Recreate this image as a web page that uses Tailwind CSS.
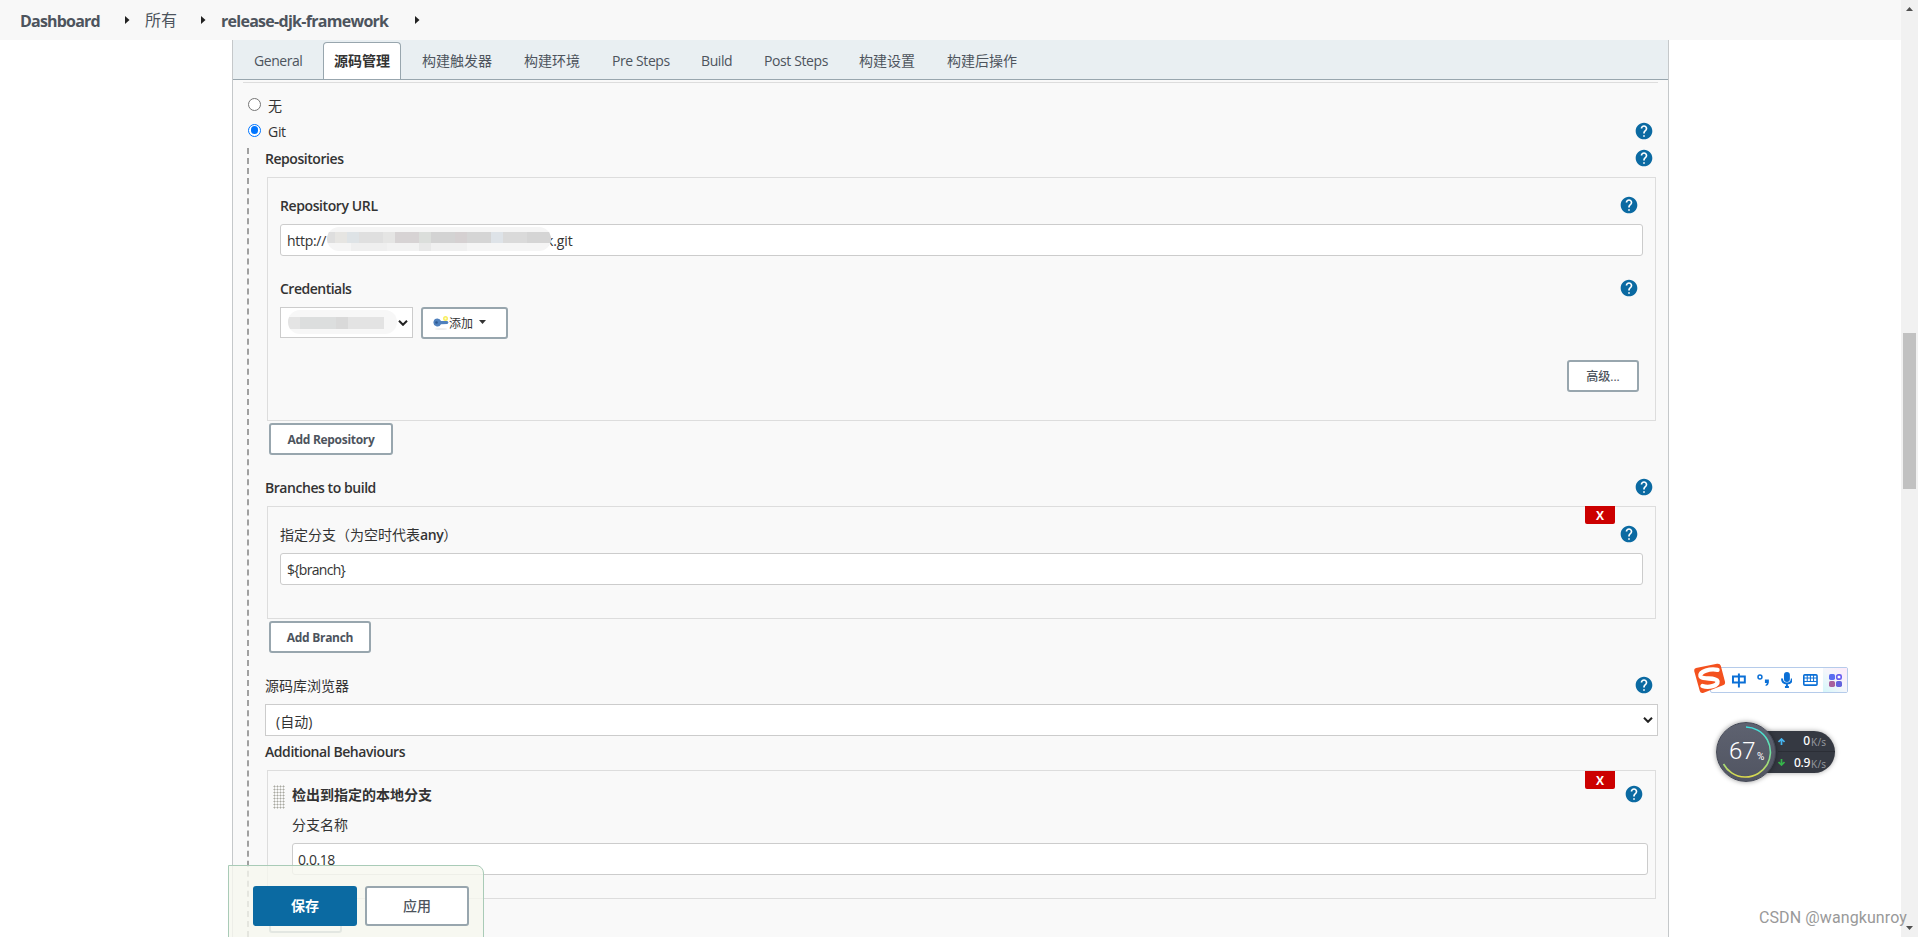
<!DOCTYPE html>
<html lang="zh">

<head>
    <meta charset="UTF-8">
    <title>release-djk-framework Config</title>
    <script src="https://cdn.jsdelivr.net/npm/@tailwindcss/browser@4"></script>
</head>

<body class="relative h-[937px] overflow-hidden bg-white font-['Open_Sans','Noto_Sans_CJK_SC',sans-serif] text-[14px] leading-5 text-[#333]">
    <!-- 图标 -->
    <svg class="hidden">
        <symbol id="help" viewBox="0 0 24 24">
            <circle cx="12" cy="12" r="8" fill="#fff" />
            <path fill="#0b6aa2" d="M12 2C6.480 2 2 6.480 2 12s4.480 10 10 10 10-4.480 10-10S17.520 2 12 2zm1 17h-2v-2h2v2zm2.070-7.750l-.9.920C13.450 12.900 13 13.500 13 15h-2v-.5c0-1.100.45-2.100 1.170-2.830l1.240-1.260c.37-.36.59-.86.59-1.410 0-1.100-.9-2-2-2s-2 .9-2 2H8c0-2.210 1.790-4 4-4s4 1.790 4 4c0 .88-.36 1.680-.93 2.250z" />
        </symbol>
        <symbol id="crumb" viewBox="0 0 5 8">
            <path fill="#222" d="M0 0l4.500 4L0 8z" />
        </symbol>
        <symbol id="chevron" viewBox="0 0 10 6">
            <path fill="none" stroke="#222" stroke-width="2" d="M1 .8l4 4 4-4" />
        </symbol>
    </svg>

    <!-- 面包屑 -->
    <header class="flex h-10 w-[1901px] items-center bg-[#f8f8f8] pl-5 text-[16px] font-bold text-[#4d545d]">
        <span class="mt-px w-[105px] tracking-[-0.8px]">Dashboard</span>
        <svg class="h-2 w-[5px]"><use href="#crumb" /></svg>
        <span class="ml-[15px] w-[56px] font-normal">所有</span>
        <svg class="h-2 w-[5px]"><use href="#crumb" /></svg>
        <span class="mt-px ml-[15px] w-[194px] tracking-[-0.72px]">release-djk-framework</span>
        <svg class="h-2 w-[5px]"><use href="#crumb" /></svg>
    </header>

    <main class="ml-[232px] h-[897px] w-[1437px] border-x border-[#c5c8ca] bg-[#f9f9f9]">
        <!-- 标签栏 -->
        <nav class="flex h-10 items-end border-b border-[#98a6ae] bg-[#e9eff2] pl-[21px] leading-[37px] text-[#4d545d]">
            <a class="w-[69px] tracking-[-0.45px]">General</a>
            <a class="mr-[21px] h-[37px] w-[78px] rounded-t-[4px] border border-b-0 border-[#98a6ae] bg-white text-center leading-[35px] font-bold text-[#333]">源码管理</a>
            <a class="w-[102px]">构建触发器</a>
            <a class="w-[88px]">构建环境</a>
            <a class="w-[89px] tracking-[-0.4px]">Pre Steps</a>
            <a class="w-[63px] tracking-[-0.4px]">Build</a>
            <a class="w-[95px] tracking-[-0.4px]">Post Steps</a>
            <a class="w-[88px]">构建设置</a>
            <a>构建后操作</a>
        </nav>

        <div class="ml-[10px] mr-[10px] mt-[2px] border-t border-[#ddd]"></div>

        <div class="flex h-[26px] items-center pl-[15px] mt-[10px]">
            <span class="mb-1 size-[13px] rounded-full border border-[#767676] bg-white"></span>
            <label class="mb-px ml-[7px]">无</label>
        </div>
        <div class="flex h-[26px] items-center pl-[15px]">
            <span class="mb-1 flex size-[13px] items-center justify-center rounded-full border border-[#0075ff] bg-white"><i class="size-[7.500px] rounded-full bg-[#0075ff]"></i></span>
            <label class="ml-[7px] tracking-[-0.3px]">Git</label>
            <svg class="mb-[2px] ml-auto mr-[14px] size-5"><use href="#help" /></svg>
        </div>

        <div class="ml-[14px] mt-[3px] h-[789px] border-l-2 border-dashed border-[#a0a0a0] pl-4 pr-[10px]">
            <div class="flex h-[29px] items-center justify-between pr-1 pb-[7px]">
                <span class="font-semibold tracking-[-0.45px]">Repositories</span>
                <svg class="mb-[2px] size-5"><use href="#help" /></svg>
            </div>
            <div class="ml-[2px] mr-[2px] h-[244px] border border-[#ddd] px-3 pt-[18px]">
                <div class="flex h-[20px] items-center justify-between pr-1">
                    <span class="font-semibold tracking-[-0.4px]">Repository URL</span>
                    <svg class="mb-[2px] size-5"><use href="#help" /></svg>
                </div>
                <div class="mt-2 flex h-8 items-center rounded-[3px] border border-[#ccc] bg-white pl-[6px] pt-[2px]">
                    <span class="w-10 tracking-[-0.3px]">http://</span>
                    <!-- 打码的仓库地址 -->
                    <span class="relative z-10 mb-[5px] flex h-6 w-[224px] flex-col overflow-hidden rounded-full bg-[#f5f5f5] pt-[5px]">
                        <span class="flex h-3">
                            <i class="w-2 bg-[#dedede]"></i><i class="w-3 bg-[#e6e5e2]"></i><i class="w-3 bg-[#dee3e6]"></i><i class="w-6 bg-[#dfdfdf]"></i><i class="w-3 bg-[#e5e5e4]"></i><i class="w-6 bg-[#d7d3d4]"></i><i class="w-3 bg-[#dbdedb]"></i><i class="w-6 bg-[#d3d3d3]"></i><i class="w-3 bg-[#d5d0d1]"></i><i class="w-6 bg-[#d5d5d5]"></i><i class="w-3 bg-[#dee3e8]"></i><i class="w-6 bg-[#dadada]"></i><i class="flex-1 bg-[#d5d5d5]"></i>
                        </span>
                        <span class="ml-6 flex h-2"><i class="w-9 bg-[#efefef]"></i><i class="w-8 bg-[#f2f2f2]"></i><i class="w-3 bg-[#e8e8e8]"></i><i class="w-9 bg-[#f0f0f0]"></i></span>
                    </span>
                    <span class="-ml-[5px] tracking-[-0.1px]">k.git</span>
                </div>
                <div class="mt-[23px] flex h-[20px] items-center justify-between pr-1">
                    <span class="font-semibold tracking-[-0.5px]">Credentials</span>
                    <svg class="mb-[2px] size-5"><use href="#help" /></svg>
                </div>
                <div class="mt-2 flex gap-2">
                    <div class="flex h-[31px] w-[133px] items-center border border-[#ccc] bg-white pl-[7px]">
                        <span class="mb-[2px] flex h-6 w-[109px] items-center overflow-hidden rounded-full bg-[#f7f7f7]"><i class="mt-[2px] h-3 w-3 bg-[#e4e4e4]"></i><i class="mt-[2px] h-3 w-9 bg-[#dcdede]"></i><i class="mt-[2px] h-3 w-3 bg-[#d9d9d9]"></i><i class="mt-[2px] h-3 w-9 bg-[#e3e3e3]"></i></span>
                        <svg class="ml-px h-[6px] w-[10px]"><use href="#chevron" /></svg>
                    </div>
                    <button class="flex h-8 w-[87px] items-center rounded-[3px] border-2 border-[#98a6ae] bg-white pl-[10px] text-[12px] text-[#333]">
                        <svg class="h-4 w-4" viewBox="0 0 16 16">
                            <ellipse cx="8" cy="14" rx="6" ry="1" fill="#eee" />
                            <circle cx="12.500" cy="3.500" r="2.500" fill="#f8ee60" />
                            <circle cx="12.500" cy="3.500" r="1" fill="#fffbd0" />
                            <path fill="#4f80bd" d="M4.500 3.500a4 4 0 1 0 3.500 5.800l6.500-.3 1-1.700-1.200-1.300H8a4 4 0 0 0-3.500-2.500z" />
                            <circle cx="3.500" cy="7.500" r="1.300" fill="#2c5890" />
                        </svg>
                        <span class="mt-[2px]">添加</span>
                        <svg class="mb-[2px] ml-[6px] h-1 w-[7px]" viewBox="0 0 7 4"><path fill="#333" d="M0 0h7L3.500 4z" /></svg>
                    </button>
                </div>
                <button class="mt-[21px] ml-auto mr-1 block h-8 w-[72px] rounded-[3px] border-2 border-[#98a6ae] bg-white pt-[2px] text-[12px] leading-[26px] font-medium text-[#4d545d]">高级...</button>
            </div>
            <button class="ml-1 mt-[2px] block h-8 w-[124px] rounded-[3px] border-2 border-[#98a6ae] bg-white pt-[2px] text-[12px] leading-[26px] font-bold tracking-[-0.3px] text-[#4d545d]">Add Repository</button>

            <div class="mt-[22px] flex h-[29px] items-center justify-between pr-1 pb-[7px]">
                <span class="font-semibold tracking-[-0.45px]">Branches to build</span>
                <svg class="mb-[2px] size-5"><use href="#help" /></svg>
            </div>
            <div class="relative ml-[2px] mr-[2px] h-[113px] border border-[#ddd] px-3 pt-[18px]">
                <button class="absolute -top-px right-[40px] h-[18px] w-[30px] rounded-b-[2px] bg-[#c00] pt-px text-[12px] leading-[18px] font-bold text-white">X</button>
                <div class="flex h-[20px] items-center justify-between pr-1">
                    <span>指定分支（为空时代表<b class="font-semibold tracking-[-0.4px]">any</b>）</span>
                    <svg class="mb-[2px] size-5"><use href="#help" /></svg>
                </div>
                <div class="mt-2 h-8 rounded-[3px] border border-[#ccc] bg-white pl-[6px] leading-8 tracking-[-0.7px]">${branch}</div>
            </div>
            <button class="ml-1 mt-[2px] block h-8 w-[102px] rounded-[3px] border-2 border-[#98a6ae] bg-white pt-[2px] text-[12px] leading-[26px] font-bold tracking-[-0.3px] text-[#4d545d]">Add Branch</button>

            <div class="mt-[22px] flex h-[29px] items-center justify-between pr-1 pb-[7px]">
                <span>源码库浏览器</span>
                <svg class="mb-[2px] size-5"><use href="#help" /></svg>
            </div>
            <div class="flex h-8 items-center justify-between border border-[#ccc] bg-white pl-[10px] pr-1">
                <span class="mt-1">(自动)</span>
                <svg class="h-[6px] w-[10px]"><use href="#chevron" /></svg>
            </div>
            <div class="mt-[6px] h-7 font-semibold tracking-[-0.43px]">Additional Behaviours</div>
            <div class="relative ml-[2px] mr-[2px] flex h-[129px] border border-[#ddd] pl-[5px] pt-[14px]">
                <button class="absolute top-0 right-[40px] h-[18px] w-[30px] rounded-b-[2px] bg-[#c00] pt-px text-[12px] leading-[18px] font-bold text-white">X</button>
                <!-- 拖动手柄 -->
                <span class="h-6 w-3 bg-[radial-gradient(circle,#a8a8a0_0.8px,transparent_1.200px)] bg-[size:3px_3px]"></span>
                <div class="ml-[7px] flex-1 pr-[7px]">
                    <div class="flex h-5 items-center justify-between pr-1">
                        <b>检出到指定的本地分支</b>
                        <svg class="mb-[2px] size-5"><use href="#help" /></svg>
                    </div>
                    <div class="mt-[10px]">分支名称</div>
                    <div class="mt-2 h-8 rounded-[3px] border border-[#ccc] bg-white pl-[5px] leading-8 tracking-[-0.4px]">0.0.18</div>
                </div>
            </div>
            <button class="ml-1 mt-[2px] block h-8 w-[73px] rounded-[3px] border-2 border-[#98a6ae] bg-white"></button>
        </div>
    </main>

    <!-- 底部保存栏 -->
    <footer class="absolute top-[865px] left-[228px] flex h-[73px] w-[256px] gap-2 rounded-tr-[8px] border border-[#a9cbb7] bg-[#f6f8ef]/80 pt-5 pl-6">
        <button class="h-10 w-[104px] rounded-[3px] bg-[#0b6aa2] font-bold text-white">保存</button>
        <button class="h-10 w-[104px] rounded-[3px] border-2 border-[#98a6ae] bg-white font-medium text-[#4d545d]">应用</button>
    </footer>

    <!-- 输入法悬浮条 -->
    <div class="absolute top-[667px] left-[1710px] flex h-[26px] w-[138px] items-center rounded-[2px] border border-[#b5cbea] bg-white text-[#0a6fd6]">
        <svg class="absolute -top-[5px] -left-[18px] h-[31px] w-[33px]" viewBox="0 0 33 31">
            <path fill="#f4511e" d="M3 5L24 .8q3-.5 3.800 2l4.200 16q.5 2.500-2 3.500L10 30q-2.500.5-3.200-2L1.200 8Q.8 5.500 3 5z" />
            <path fill="none" stroke="#fff" stroke-width="4.400" stroke-linecap="round" d="M24.500 6.800C17 5.500 6.500 8 7.500 13c1 4 16.500 1 17 5.500.4 4.500-9 6.500-15 4.500" />
        </svg>
        <svg class="ml-[20px] h-[15px] w-[16px]" viewBox="0 0 16 15" fill="none" stroke="currentColor" stroke-width="2"><path d="M2 3.500h12v6H2zM8 .5v14" /></svg>
        <svg class="ml-[10px] h-3 w-[13px]" viewBox="0 0 13 12"><circle cx="3" cy="3" r="2" fill="none" stroke="currentColor" stroke-width="1.500" /><path fill="currentColor" d="M8 5.500h4v3q0 2.500-3 3.500l-.5-1q1.500-.8 1.500-2H8z" /></svg>
        <svg class="ml-[11px] h-4 w-3" viewBox="0 0 12 16"><rect x="3" width="6" height="10" rx="3" fill="currentColor" /><path fill="none" stroke="currentColor" stroke-width="2" d="M1 6.500q0 5 5 5t5-5M6 11.500V14M4 15h4" /></svg>
        <svg class="ml-[11px] h-3 w-[15px]" viewBox="0 0 15 12"><rect x=".8" y=".8" width="13.400" height="10.400" rx="1" fill="none" stroke="currentColor" stroke-width="1.600" /><path stroke="currentColor" stroke-width="1" d="M1 4h13M1 7.500h13M4.300 1v7M7.500 1v7M10.700 1v7" /></svg>
        <span class="ml-[5px] flex h-6 w-[24px] items-center justify-center bg-linear-to-tr from-[#d4f6fa] via-[#f4f6fb] to-[#fdeafa]">
            <svg class="size-[13px]" viewBox="0 0 14 14"><rect width="6.500" height="6.500" rx="1.800" fill="#5b6cf0" /><rect x="8.400" y=".9" width="4.700" height="4.700" rx="1.500" fill="#fff" stroke="#6a5cf0" stroke-width="1.800" /><rect y="7.500" width="6.500" height="6.500" rx="1.800" fill="#a8609c" /><rect x="7.500" y="7.500" width="6.500" height="6.500" rx="1.800" fill="#6463dd" /></svg>
        </span>
    </div>

    <!-- 网速悬浮球 -->
    <div class="absolute top-[731px] left-[1746px] h-[42px] w-[89px] rounded-r-full bg-[#353942] shadow-[0_0_5px_rgba(0,0,0,0.35)]">
        <div class="ml-[32px] flex h-[21px] items-center border-b border-[#2b2e36] pr-[8px] font-['Noto_Sans']">
            <svg class="h-[7px] w-[7px]" viewBox="0 0 7 7" fill="none" stroke="#45b5f0" stroke-width="1.700"><path d="M.5 4l3-3 3 3M3.500 1v6" /></svg>
            <span class="ml-auto text-[12px] font-medium text-white">0</span><span class="ml-px mt-[2px] w-4 text-[10px] tracking-[0.2px] text-[#92959c]">K/s</span>
        </div>
        <div class="ml-[32px] flex h-[21px] items-center pr-[8px] font-['Noto_Sans']">
            <svg class="h-[7px] w-[7px]" viewBox="0 0 7 7" fill="none" stroke="#35b54a" stroke-width="1.700"><path d="M.5 3l3 3 3-3M3.500 6V0" /></svg>
            <span class="ml-auto text-[12px] font-medium tracking-[-0.3px] text-white">0.9</span><span class="ml-px mt-[2px] w-4 text-[10px] tracking-[0.2px] text-[#92959c]">K/s</span>
        </div>
    </div>
    <div class="absolute top-[722px] left-[1716px] flex size-[60px] items-center rounded-full border border-[#454956] bg-linear-to-b from-[#5e6270] to-[#515562] pl-[12px] text-white shadow-[0_0_5px_rgba(0,0,0,0.4)]">
        <svg class="absolute inset-0 size-[58px]" viewBox="0 0 58 58">
            <defs>
                <linearGradient id="ring" x1="0" y1="0" x2="0" y2="1"><stop offset="0" stop-color="#3fe0e0" /><stop offset=".5" stop-color="#6fe0a0" /><stop offset="1" stop-color="#dcd84c" /></linearGradient>
            </defs>
            <path fill="none" stroke="url(#ring)" stroke-width="1.600" d="M29 4a25 25 0 1 1-22.500 37" />
        </svg>
        <span class="mb-[2px] w-[27px] font-['Roboto'] text-[24px] font-light">67</span><span class="mt-[9px] ml-px font-['Roboto'] text-[10px]">%</span>
    </div>

    <!-- 滚动条 -->
    <div class="absolute top-0 right-0 flex h-[937px] w-[17px] flex-col items-center bg-[#f1f1f1]">
        <svg class="mt-[7px] h-1 w-[7px]" viewBox="0 0 7 4"><path fill="#505050" d="M0 4h7L3.500 0z" /></svg>
        <div class="mt-[322px] h-[156px] w-[13px] bg-[#c1c1c1]"></div>
        <svg class="mt-auto mb-[7px] h-1 w-[7px]" viewBox="0 0 7 4"><path fill="#505050" d="M0 0h7L3.500 4z" /></svg>
    </div>

    <div class="absolute top-[906px] left-[1759px] font-['Roboto'] text-[16px] leading-6 tracking-[0.1px] whitespace-nowrap text-[#999]">CSDN @wangkunroy</div>
</body>

</html>
